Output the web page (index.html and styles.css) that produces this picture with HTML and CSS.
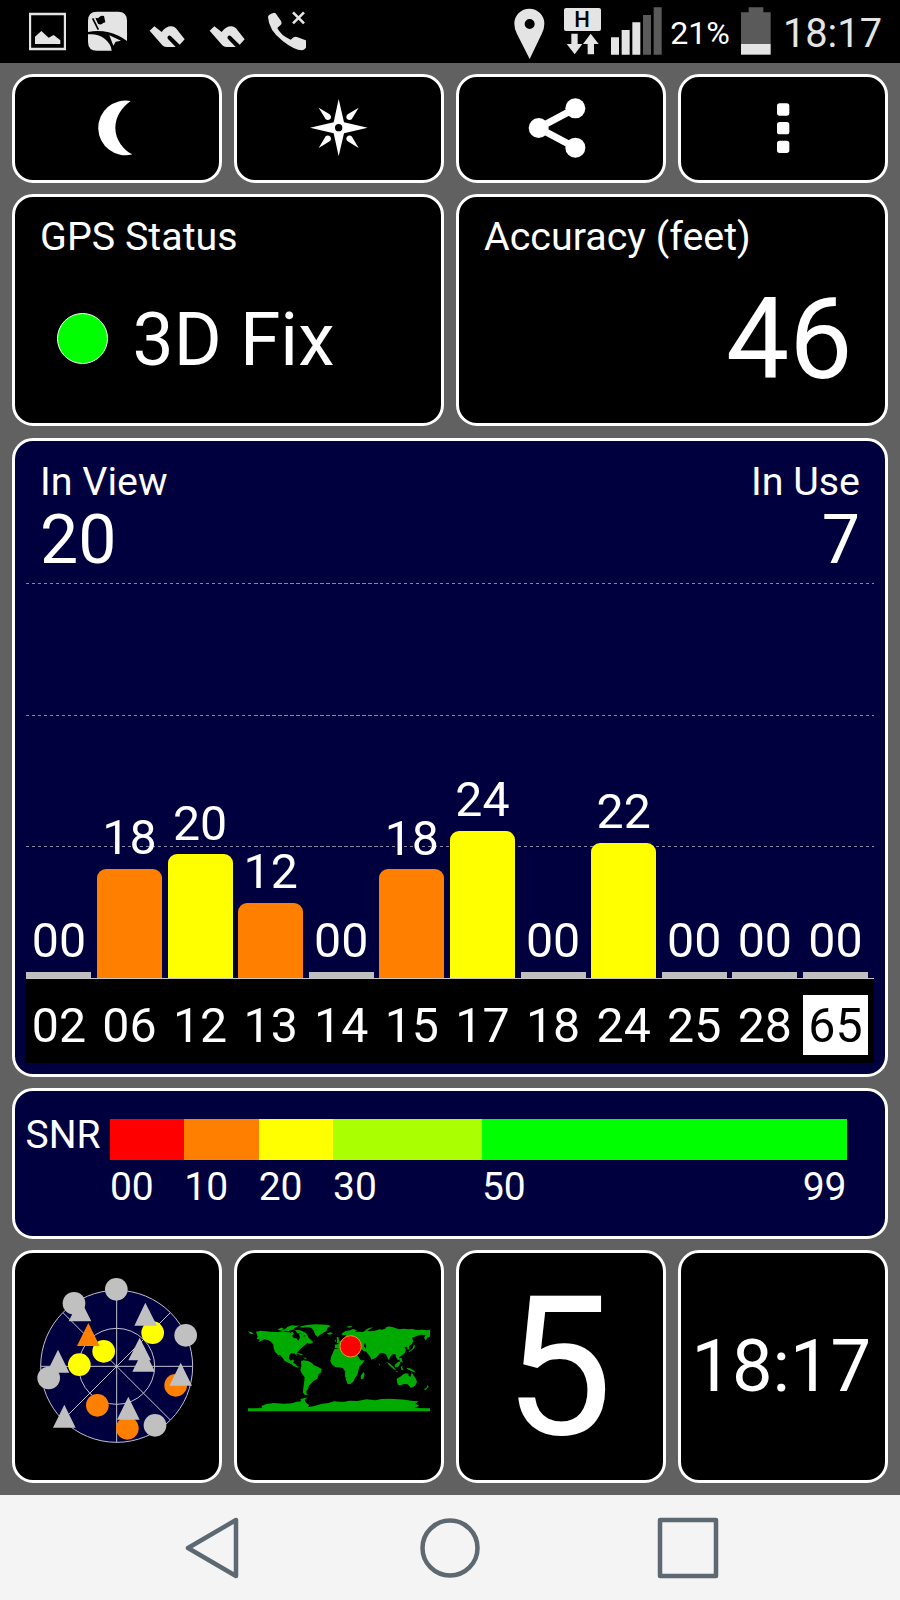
FILE: index.html
```html
<!DOCTYPE html>
<html lang="en">
<head>
    <meta charset="UTF-8">
    <meta name="viewport" content="width=device-width, initial-scale=1.0">
    <title>GPS Test</title>
    <link rel="stylesheet" href="styles.css">
</head>
<body>
    <header class="status-bar">
        <div class="status-left">
            <svg class="icon-picture" viewBox="87 0 111 186"><path d="M90 42h105v105H90z" fill="none" stroke="currentColor" stroke-width="7"/><path d="M105 132v-22l19-17 22 20 15-8 20 16v11z"/></svg>
            <svg class="icon-nav" viewBox="264 0 117 186"><path d="M264 96V62q0-27 27-27h63q27 0 27 27v61q-24-18-55-26-32-8-62-1zM264 103q28-3 48 12 22 17 23 37h-44q-27 0-27-27z"/><path d="M328 106l35 16-16 3-7 12z"/><path d="M278 55l17 34" stroke="#000" stroke-width="5" fill="none"/><path d="M286 53q9 4 13-3 6-5 13-2l4 19q-6 0-10 5-6 3-12-1z" fill="#000"/></svg>
            <svg class="icon-houzz" viewBox="448 0 108 186"><path d="M450 92l14-13 22 17q12-17 29-17 8 0 14 6l26 33-15 16-26-25q-6-5-10 1-2 3 1 7l23 24h-28q-7 0-12-5z"/></svg>
            <svg class="icon-houzz" viewBox="448 0 108 186"><path d="M450 92l14-13 22 17q12-17 29-17 8 0 14 6l26 33-15 16-26-25q-6-5-10 1-2 3 1 7l23 24h-28q-7 0-12-5z"/></svg>
            <svg class="icon-call" viewBox="803 0 117 186"><path d="M806 51q1-7 16-12 6-2 10 5l13 19q4 8-2 13l-9 8q10 22 40 35l9-7q6-4 12 0l24 9q9 5 6 13-6 16-17 17-22 0-58-28-42-32-44-72z"/><path d="M881 37l33 33m0-33l-33 33" fill="none" stroke="currentColor" stroke-width="8"/></svg>
        </div>
        <div class="status-right">
            <svg class="icon-pin" viewBox="190 0 93 186"><path fill-rule="evenodd" d="M237 177l-38-75q-8-15-8-31a45 45 0 0 1 90 0q0 16-8 31zM237 57a15 15 0 1 0 0 30a15 15 0 0 0 0-30z"/></svg>
            <svg class="icon-data" viewBox="342 0 111 186"><rect x="342" y="24" width="111" height="69" rx="6"/><text class="data-mark" x="396" y="81">H</text><path d="M364 101h19v31h14l-23 31-24-31h14zM413 163v-31h-14l23-31 24 31h-14v31z"/></svg>
            <svg class="icon-signal" viewBox="483 0 153 186"><path d="M483 112h24v52h-24zM515 90h24v74h-24zM547 67h24v97h-24z"/><path fill="#5a5a5a" d="M579 45h24v119h-24zM611 22h24v142h-24z"/></svg>
            <span class="battery-text">21%</span>
            <svg class="icon-battery" viewBox="871 0 90 186"><path fill="#5a5a5a" d="M871 37h23V22h44v15h22v96h-89z"/><path d="M871 132h89v32h-89z"/></svg>
            <span class="clock">18:17</span>
        </div>
    </header>

    <main class="screen">
        <div class="row row-buttons">
            <button class="card" title="Night mode"><svg viewBox="265 295 180 180"><path d="M396 304a82 82 0 1 0 5 160c-28-14-51-45-51-80 0-32 20-62 46-80z"/></svg></button>
            <button class="card" title="Compass"><svg viewBox="927 295 180 180"><path fill-rule="evenodd" d="M1016 298l16 70 71 16-71 17-16 69-15-69-71-17 71-16zM1016 373a11 11 0 1 0 0 22a11 11 0 0 0 0-22z"/><path d="M956 324l33 20q7 7 2 14-7 6-14 1zM1076 324l-33 20q-7 7-2 14 7 6 14 1zM956 445l33-20q7-7 2-14-7-6-14-1zM1076 445l-33-20q-7-7-2-14 7-6 14-1z"/></svg></button>
            <button class="card" title="Share"><svg viewBox="243 294 180 180"><circle cx="266" cy="384" r="30"/><circle cx="376" cy="325" r="30"/><circle cx="376" cy="443" r="30"/><path d="M376 325L266 384l110 59" fill="none" stroke="currentColor" stroke-width="21"/></svg></button>
            <button class="card" title="Menu"><svg viewBox="909 295 180 180"><rect x="981" y="311" width="37" height="37" rx="8"/><rect x="981" y="367" width="37" height="37" rx="8"/><rect x="981" y="423" width="37" height="37" rx="8"/></svg></button>
        </div>

        <div class="row row-status">
            <section class="card info-card">
                <h2>GPS Status</h2>
                <div class="fix"><span class="fix-dot"></span><span class="fix-text">3D Fix</span></div>
            </section>
            <section class="card info-card">
                <h2>Accuracy (feet)</h2>
                <div class="accuracy">46</div>
            </section>
        </div>

        <section class="card chart-card">
            <div class="chart-head">
                <div><h2>In View</h2><div class="count">20</div></div>
                <div class="in-use"><h2>In Use</h2><div class="count">7</div></div>
            </div>
            <div class="plot">
                <div class="sat"><span>00</span><i class="bar none"></i></div>
                <div class="sat"><span>18</span><i class="bar orange" style="height: 109px"></i></div>
                <div class="sat"><span>20</span><i class="bar yellow" style="height: 123.5px"></i></div>
                <div class="sat"><span>12</span><i class="bar orange" style="height: 75px"></i></div>
                <div class="sat"><span>00</span><i class="bar none"></i></div>
                <div class="sat"><span>18</span><i class="bar orange" style="height: 108.5px"></i></div>
                <div class="sat"><span>24</span><i class="bar yellow" style="height: 147px"></i></div>
                <div class="sat"><span>00</span><i class="bar none"></i></div>
                <div class="sat"><span>22</span><i class="bar yellow" style="height: 135px"></i></div>
                <div class="sat"><span>00</span><i class="bar none"></i></div>
                <div class="sat"><span>00</span><i class="bar none"></i></div>
                <div class="sat"><span>00</span><i class="bar none"></i></div>
            </div>
            <div class="sat-ids">
                <span>02</span><span>06</span><span>12</span><span>13</span><span>14</span><span>15</span><span>17</span><span>18</span><span>24</span><span>25</span><span>28</span><span class="selected">65</span>
            </div>
        </section>

        <section class="card snr-card">
            <span class="snr-label">SNR</span>
            <div class="snr-scale">
                <div class="snr-step s0"><i></i>00</div>
                <div class="snr-step s10"><i></i>10</div>
                <div class="snr-step s20"><i></i>20</div>
                <div class="snr-step s30"><i></i>30</div>
                <div class="snr-step s50"><i></i><div class="snr-ends"><span>50</span><span>99</span></div></div>
            </div>
        </section>

        <div class="row row-tiles">
            <section class="card">
                <!-- sky view -->
                <svg class="sky" viewBox="0 0 600 600">
                    <circle cx="290" cy="322" r="228" fill="#00003f"/>
                    <g fill="none" stroke="#c0c0d0" stroke-width="3">
                        <circle cx="290" cy="322" r="228"/>
                        <circle cx="290" cy="322" r="114"/>
                        <path d="M290 94v456M62 322h456M129 161l322 322M129 483l322-322"/>
                    </g>
                    <g fill="#c0c0c0">
                        <circle cx="289" cy="91" r="34"/><circle cx="162" cy="133" r="34"/><circle cx="497" cy="229" r="34"/><circle cx="86" cy="357" r="34"/><circle cx="405" cy="499" r="34"/>
                        <path d="M180 119l34 68h-68zM114 272l34 69H80zM133 437l34 69h-68z"/>
                    </g>
                    <g fill="#ff0"><circle cx="251" cy="277" r="34"/><circle cx="178" cy="317" r="34"/><circle cx="398" cy="221" r="34"/></g>
                    <g fill="#ff8000"><circle cx="232" cy="439" r="34"/><circle cx="322" cy="508" r="34"/><circle cx="467" cy="379" r="34"/><path d="M205 192l34 69h-68z"/></g>
                    <path fill="#c0c0c0" d="M376 131l35 69h-68zM359 236l34 68h-68zM371 269l34 69h-68zM482 311l34 69h-68zM325 413l34 69h-68z"/>
                </svg>
            </section>
            <section class="card">
                <!-- world map -->
                <svg class="world" viewBox="37 70 546 270">
                    <g fill="#0a0">
                        <path d="M37 95l12 3 6 6-12-2zM61 96l16-3 28 3 20 1 18-2 12 3 16-1 4 5-6 6 5 7 8 1 6 7 5-9-3-11 8-3 10 8 7-1 4 7 8 8 6 6-10 5-8-3-7 7-8 5-7 7-9 10-2 9-4-6-11-1-6 5-1 11 5 6 7-4 3 4-3 6 7 4 5 7 7 1-5 3-12-5-9-7-10-4-9-5-5-8-8-9-5-1 7 11-9-11-8-9-4-11-1-10-7-9-9-5-11-2-10 5-9 4 6-8-10-3 3-6z"/>
                        <path d="M125 90l10-6 9 1-6 5 11-2 7-7 13-4 14 1 9-1-10 6-8 3 5 3-13 2-8 4-9-2-9 1zM178 92l12-1 11 4 11 6 4 8-9-1-10-6-12-1zM191 81l22-5 25-2 35 1 13 3-10 6-4 10-11 7-9 5-6 6-7-6-5-13-6-8-12-3-17 2zM274 101l11-3 6 3-7 4-8-1zM181 161l10 0 12 5-8 0zM202 173l12 2-5 3z"/>
                        <path d="M196 184l8-2 14 2 10 5 7 8 11 4 12 7-2 10-8 7-3 12-11 6-7 8-7 7-3 9-5 7 1 8 3 4-10-1-4-7 1-13 2-15 2-17-9-12-4-11 3-10z"/>
                        <path d="M298 145l-1-10 12-2-2-7 7-1 6-6 9-5 2-8-10 1-4-4 12-9 14-2 9-4 11 4-6 6 12-2 13 1 8-5 12 3 15-2 15-4 8 1 14-6 13-3 12 4 11 4 15-2 13 2 12-1 13 3 17-1 14 2 12-3 11 2 7 3-1 5-12 2-2 7-14 6-5 8-5-8 5-7-14-2-11 3-8 4-8 2 4 9-4 10-9 6 1 8-5 3-2-9-8 1 5 8-4 10-9 8-8 4 3 10-7-2-5-8-2-8-7-1-9 9-3 10-5-8-4-10-10-4-8 1-4 4-8 9-14 6-3-8-7-9-5-7-8-2-7-5-3-6-6 0-2-8-6 4 0 7-5-7-7 1-5 7-11 0z"/>
                        <path d="M296 149l15-4 8 3 6 5 14-2 14 3 7 1 7 15 8 12 12 0-7 10-9 9-3 12-3 12-7 10-5 11-9 7-8 0-5-13-3-12 1-12-7-10-10-3-13-1-11-8-4-10 2-12zM383 217l4 6-4 14-7 2-1-10z"/>
                        <path d="M483 237l11-6 7-6 9-4 9 1-1 6 7 3 3-13 5 9 7 9 4 10-4 10-8 7-9-2-7-7-11-1-10 4-8-1-3-8zM523 261l6 0-3 4zM564 269l9-5 1-8 5 5-9 10zM452 187l9 4 12 10 8 10-7-2-11-10zM477 196l9-8 9-4-2 10-7 9-8-1zM495 202l7-4-3 5 5 8-6 0zM476 213l14 2-7 1zM492 174l6 2 3 13-8-5zM511 204l12 2 13 7 3 6-11-5-9-3zM518 155l9-5 4-4 4-13 3 8-5 8-11 7zM303 112l5 0 4 16-9 3 1-8zM297 123l4-3 0 7zM331 81l12-2 8 2-11 3zM389 91l10-6 14-2-10 5-10 7zM448 84l12-4 10 4-12 2zM429 192l4 1-2 5z"/>
                        <path d="M37 326l43-1-3-6 15-6 22-3 31 2 24-1 14-5 13-1-2-7 22-5-9 8 4 8 10 7-4 6 16-2 26-8 20-2 16-5 27 2 19-4 24 1 28-5 26 3 18-4 25-1 26 2 20 1 24 4 17 1-10 7 12 6-14 7L583 326V335H37z"/>
                    </g>
                    <g fill="#000">
                        <path d="M388 130l4 9-2 8-6-8zM366 163l9 17 2-3-8-15zM205 105l5 4-7 2zM157 94l13 1-6 5zM371 160l10 4-4 5z"/>
                    </g>
                    <circle cx="345" cy="140" r="32" fill="#f00" stroke="#e0a020" stroke-width="3"/>
                </svg>
            </section>
            <section class="card"><span class="speed">5</span></section>
            <section class="card"><span class="time">18:17</span></section>
        </div>
    </main>

    <nav class="nav-bar">
        <svg viewBox="0 0 64 64"><path d="M56 4v56L8 32z"/></svg>
        <svg viewBox="0 0 64 64"><circle cx="32" cy="32" r="27.5"/></svg>
        <svg viewBox="0 0 64 64"><path d="M4 4h56v56H4z"/></svg>
    </nav>
</body>
</html>
```
FILE: styles.css
```css
:root {
    --bg: #616161;
    --navy: #00003f;
    --orange: #ff8000;
    --yellow: #ffff00;
    --grey: #bfbfbf;
    --dash: repeating-linear-gradient(90deg, #8888a5 0 3.5px, transparent 3.5px 6px);
}

* {
    box-sizing: border-box;
}

body {
    margin: 0;
    width: 900px;
    height: 1600px;
    display: flex;
    flex-direction: column;
    background: var(--bg);
    color: #fff;
    font-family: Roboto, sans-serif;
    overflow: hidden;
}

svg {
    display: block;
    fill: currentColor;
}

h2 {
    margin: 0;
    font-size: 39.4px;
    line-height: 46px;
    font-weight: 400;
}

/* status bar */
.status-bar {
    height: 62.5px;
    display: flex;
    justify-content: space-between;
    padding: 0 18px 0 29px;
    background: #000;
    color: #e4e4e4;
}

.status-left,
.status-right {
    display: flex;
    height: 62px;
}

.status-bar svg {
    height: 62px;
    flex: none;
}

.icon-picture { width: 37px; }
.icon-nav { width: 39px; margin-left: 22px; }
.icon-houzz { width: 36px; margin-left: 22px; }
.icon-houzz + .icon-houzz { margin-left: 24px; }
.icon-call { width: 39px; margin-left: 22px; }
.icon-pin { width: 31px; }
.icon-data { width: 37px; margin-left: 19.5px; }
.icon-signal { width: 51px; margin-left: 10px; }
.icon-battery { width: 30px; margin-left: 11px; }

.data-mark {
    font: 500 66px Roboto, sans-serif;
    text-anchor: middle;
    fill: #000;
}

.battery-text {
    margin-left: 8px;
    padding-top: 2px;
    font-size: 32.2px;
    line-height: 62px;
    color: #fff;
}

.clock {
    margin-left: 12px;
    padding-top: 3px;
    font-size: 39.8px;
    line-height: 62px;
}

/* cards */
.screen {
    flex: 1;
    display: flex;
    flex-direction: column;
    gap: 11.2px;
    padding: 11.2px 12px 0 11.6px;
}

.row {
    display: flex;
    gap: 11.5px;
}

.card {
    flex: 1 1 0;
    min-width: 0;
    display: flex;
    align-items: center;
    justify-content: center;
    padding: 0;
    border: 3px solid #fff;
    border-radius: 21px;
    background: #000;
    color: #fff;
}

.row-buttons { height: 109px; }
.row-buttons svg { width: 60px; height: 60px; overflow: visible; }
.row-status { height: 232.5px; }
.row-tiles { height: 233px; }

.info-card {
    flex-direction: column;
    align-items: stretch;
    justify-content: flex-start;
    padding: 17.5px 24.5px 0 25.5px;
}

.fix {
    display: flex;
    align-items: center;
    margin-top: 38px;
    padding-left: 16.5px;
}

.fix-dot {
    width: 51px;
    height: 51px;
    margin: -3px 25px 0 0;
    border: 1px solid #fff;
    border-radius: 50%;
    background: #00ff00;
}

.fix-text {
    font-size: 73.2px;
    line-height: 84px;
}

.accuracy {
    margin: 20px 8px 0 0;
    text-align: right;
    font-size: 112.5px;
    line-height: 120px;
}

/* satellite chart */
.chart-card {
    flex: 0 0 639px;
    flex-direction: column;
    align-items: stretch;
    justify-content: flex-start;
    padding: 0 11px;
    background: var(--navy);
}

.chart-head {
    height: 142.3px;
    display: flex;
    justify-content: space-between;
    padding: 18px 14px 0 14.5px;
}

.in-use {
    text-align: right;
}

.count {
    margin-top: 3px;
    font-size: 68px;
    line-height: 64px;
}

.plot {
    height: 396px;
    display: flex;
    align-items: flex-end;
    gap: 5.6px;
    padding-left: 0.8px;
    border-bottom: 1px solid #c8c8c8;
    background-image: var(--dash), var(--dash), var(--dash);
    background-size: 100% 1px;
    background-position: 0 0, 0 132px, 0 263px;
    background-repeat: no-repeat;
}

.sat {
    width: 65px;
    font-size: 48.3px;
    line-height: 50px;
    text-align: center;
}

.sat span {
    display: block;
    margin-bottom: 5.5px;
}

.bar {
    display: block;
    border-radius: 9px 9px 0 0;
}

.bar.none {
    height: 6px;
    border-radius: 0;
    background: var(--grey);
}

.orange { background: var(--orange); }
.yellow { background: var(--yellow); }

.sat-ids {
    height: 84px;
    display: flex;
    gap: 5.6px;
    padding: 16px 0 0 0.8px;
    background: #000;
}

.sat-ids span {
    width: 65px;
    height: 60px;
    font-size: 48.3px;
    line-height: 62px;
    text-align: center;
}

.sat-ids .selected {
    background: #fff;
    color: #000;
}

/* SNR scale */
.snr-card {
    flex: 0 0 151.5px;
    align-items: flex-start;
    justify-content: flex-start;
    padding: 28.5px 38.5px 0 11px;
    background: var(--navy);
    font-size: 39px;
}

.snr-label {
    width: 84.3px;
    line-height: 32px;
}

.snr-scale {
    flex: 1;
    display: flex;
    line-height: 54px;
}

.snr-step {
    flex: 10 1 0;
}

.snr-step i {
    display: block;
    height: 40.5px;
}

.s30 { flex-grow: 20; }
.s50 { flex-grow: 49; }
.s0 i { background: #ff0000; }
.s10 i { background: var(--orange); }
.s20 i { background: var(--yellow); }
.s30 i { background: #aaff00; }
.s50 i { background: #00ff00; }

.snr-ends {
    display: flex;
    justify-content: space-between;
}

/* bottom tiles */
.sky {
    width: 200px;
    height: 200px;
    margin: -15px -3px 0 3px;
}

.world {
    width: 182px;
    height: 90px;
    margin: 2px 0 0 0;
}

.speed {
    font-size: 194px;
    line-height: 228px;
    margin: 3px 5px 0 0;
}

.time {
    margin-right: 3px;
    font-size: 72.2px;
    line-height: 80px;
}

/* navigation */
.nav-bar {
    height: 105px;
    display: grid;
    grid-template-columns: repeat(3, 238px);
    justify-content: center;
    align-items: center;
    justify-items: center;
    background: #f4f4f4;
    color: #5c6872;
}

.nav-bar svg {
    width: 64px;
    height: 64px;
    fill: none;
    stroke: currentColor;
    stroke-width: 4.5;
    stroke-linejoin: round;
}
```
